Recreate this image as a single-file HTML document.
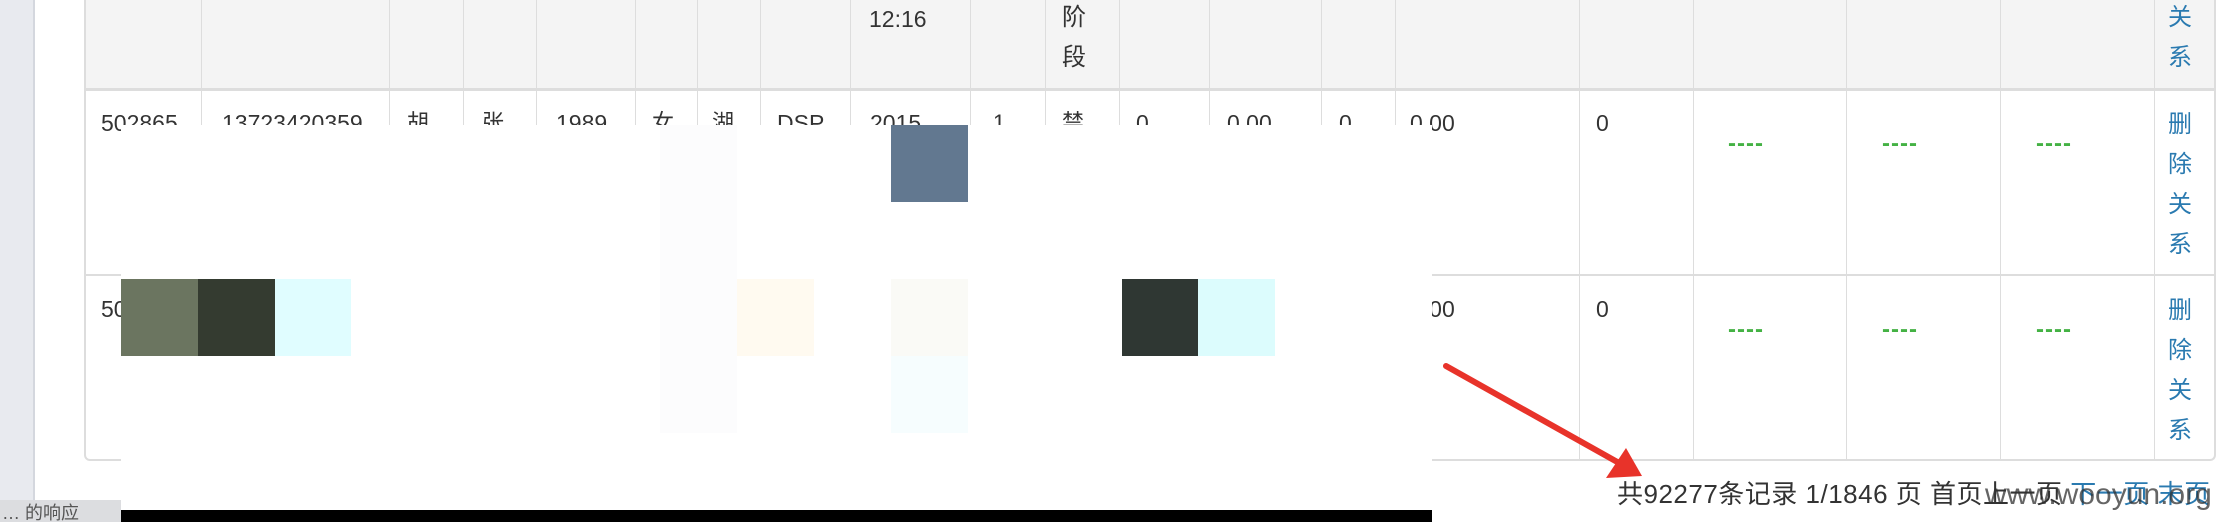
<!DOCTYPE html>
<html><head><meta charset="utf-8"><style>
*{margin:0;padding:0;box-sizing:border-box}
body{width:2218px;height:522px;position:relative;overflow:hidden;background:#fff;font-family:"Liberation Sans","Noto Sans CJK SC",sans-serif;color:#333}
.a{position:absolute}
.t{position:absolute;font-size:22px;line-height:26px;white-space:nowrap}
.v{position:absolute;width:1px;background:#ddd}
.h{position:absolute;height:2px;background:#ddd}
.g{color:#44b244;font-size:24px;font-weight:bold;letter-spacing:1px}
.b{color:#2a7ab0;font-size:24px;line-height:40px;width:30px;white-space:normal}
</style></head><body>
<div class="a" style="left:0;top:0;width:35px;height:505px;background:#e8eaef;border-right:2px solid #d4d7de"></div>
<div class="a" style="left:85px;top:0;width:2131px;height:89px;background:#f4f4f4"></div>
<div class="a" style="left:84px;top:0;width:2132px;height:461px;border:2px solid #ddd;border-top:none;border-radius:0 0 6px 6px"></div>
<div class="h" style="left:85px;top:88px;width:2131px;height:3px"></div>
<div class="h" style="left:85px;top:274px;width:2131px"></div>
<div class="v" style="left:201px;top:0;height:460px"></div>
<div class="v" style="left:389px;top:0;height:460px"></div>
<div class="v" style="left:463px;top:0;height:460px"></div>
<div class="v" style="left:536px;top:0;height:460px"></div>
<div class="v" style="left:635px;top:0;height:460px"></div>
<div class="v" style="left:697px;top:0;height:460px"></div>
<div class="v" style="left:760px;top:0;height:460px"></div>
<div class="v" style="left:850px;top:0;height:460px"></div>
<div class="v" style="left:970px;top:0;height:460px"></div>
<div class="v" style="left:1045px;top:0;height:460px"></div>
<div class="v" style="left:1119px;top:0;height:460px"></div>
<div class="v" style="left:1209px;top:0;height:460px"></div>
<div class="v" style="left:1321px;top:0;height:460px"></div>
<div class="v" style="left:1395px;top:0;height:460px"></div>
<div class="v" style="left:1579px;top:0;height:460px"></div>
<div class="v" style="left:1693px;top:0;height:460px"></div>
<div class="v" style="left:1846px;top:0;height:460px"></div>
<div class="v" style="left:2000px;top:0;height:460px"></div>
<div class="v" style="left:2154px;top:0;height:460px"></div>
<div class="t" style="left:869px;top:6px;font-size:23px">12:16</div>
<div class="t" style="left:1062px;top:5px;font-size:24px">阶</div>
<div class="t" style="left:1062px;top:45px;font-size:24px">段</div>
<div class="t b" style="left:2168px;top:-2px">关系</div>
<div class="t" style="left:101px;top:110px;font-size:23px">502865</div>
<div class="t" style="left:222px;top:110px;font-size:23px">13723420359</div>
<div class="t" style="left:407px;top:110px">胡</div>
<div class="t" style="left:482px;top:110px">张</div>
<div class="t" style="left:556px;top:110px;font-size:23px">1989</div>
<div class="t" style="left:652px;top:110px">女</div>
<div class="t" style="left:712px;top:110px">湖</div>
<div class="t" style="left:777px;top:110px;font-size:23px">DSP</div>
<div class="t" style="left:870px;top:110px;font-size:23px">2015</div>
<div class="t" style="left:993px;top:110px">1</div>
<div class="t" style="left:1062px;top:110px">禁</div>
<div class="t" style="left:1136px;top:110px;font-size:23px">0</div>
<div class="t" style="left:1227px;top:110px;font-size:23px">0.00</div>
<div class="t" style="left:1339px;top:110px;font-size:23px">0</div>
<div class="t" style="left:1410px;top:110px;font-size:23px">0.00</div>
<div class="t" style="left:1596px;top:110px;font-size:23px">0</div>
<div class="t g" style="left:1728px;top:131px">----</div>
<div class="t g" style="left:1882px;top:131px">----</div>
<div class="t g" style="left:2036px;top:131px">----</div>
<div class="t b" style="left:2168px;top:105px">删除关系</div>
<div class="t" style="left:101px;top:296px;font-size:23px">50</div>
<div class="t" style="left:1410px;top:296px;font-size:23px">0.00</div>
<div class="t" style="left:1596px;top:296px;font-size:23px">0</div>
<div class="t g" style="left:1728px;top:317px">----</div>
<div class="t g" style="left:1882px;top:317px">----</div>
<div class="t g" style="left:2036px;top:317px">----</div>
<div class="t b" style="left:2168px;top:291px">删除关系</div>
<!-- overlay -->
<div class="a" style="left:121px;top:125px;width:1311px;height:385px;background:#fff"></div>
<div class="a" style="left:121px;top:510px;width:1311px;height:12px;background:#000"></div>
<div class="a" style="left:891px;top:125px;width:77px;height:77px;background:#627890"></div>
<div class="a" style="left:121px;top:279px;width:77px;height:77px;background:#6b7560"></div>
<div class="a" style="left:198px;top:279px;width:77px;height:77px;background:#343b30"></div>
<div class="a" style="left:275px;top:279px;width:76px;height:77px;background:#e0fdff"></div>
<div class="a" style="left:1122px;top:279px;width:76px;height:77px;background:#2f3733"></div>
<div class="a" style="left:1198px;top:279px;width:77px;height:77px;background:#dcfcfd"></div>
<div class="a" style="left:737px;top:279px;width:77px;height:77px;background:#fffaf0"></div>
<div class="a" style="left:891px;top:279px;width:77px;height:77px;background:#fafaf6"></div>
<div class="a" style="left:891px;top:356px;width:77px;height:77px;background:#f6fdfe"></div>
<div class="a" style="left:660px;top:125px;width:77px;height:308px;background:#fcfcfd"></div>
<div class="a" style="left:0;top:500px;width:121px;height:22px;background:#dcdde0;font-size:18px;line-height:26px;color:#555;padding-left:2px">… 的响应</div>
<svg class="a" style="left:0;top:0" width="2218" height="522">
<line x1="1446" y1="366" x2="1628" y2="468" stroke="#e8332a" stroke-width="6" stroke-linecap="round"/>
<polygon points="1642,476 1606,478 1626,448" fill="#e8332a"/>
</svg>
<div class="t" style="left:1617px;top:478px;font-size:26px;line-height:32px;color:#333;letter-spacing:0.5px">共92277条记录 1/1846 页 首页上一页 <span style="color:#2a7ab0">下一页 末页</span></div>
<div class="t" style="left:1985px;top:478px;font-size:30px;line-height:34px;color:rgba(50,50,50,0.75)">www.wooyun.org</div>
</body></html>
